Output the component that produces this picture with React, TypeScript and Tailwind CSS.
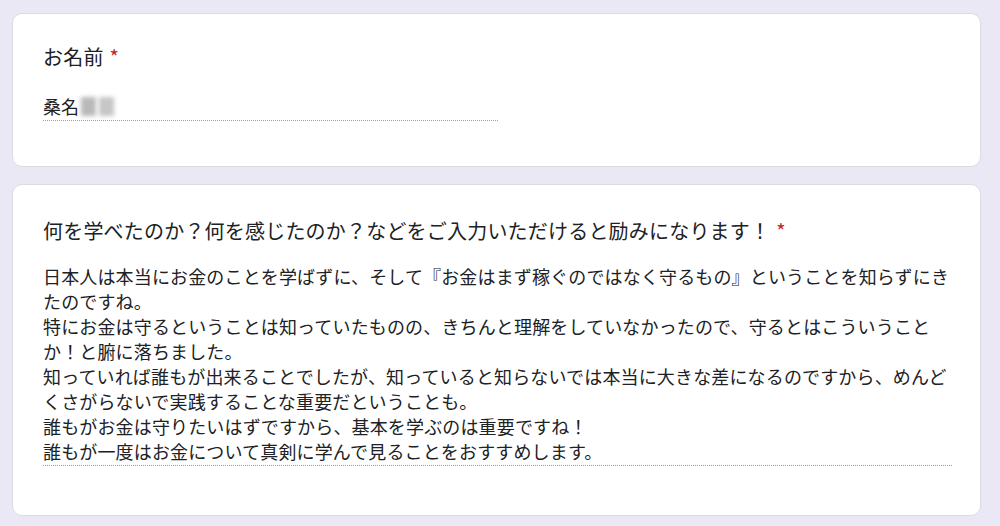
import React from "react";

const answerLines = [
  "日本人は本当にお金のことを学ばずに、そして『お金はまず稼ぐのではなく守るもの』ということを知らずにき",
  "たのですね。",
  "特にお金は守るということは知っていたものの、きちんと理解をしていなかったので、守るとはこういうこと",
  "か！と腑に落ちました。",
  "知っていれば誰もが出来ることでしたが、知っていると知らないでは本当に大きな差になるのですから、めんど",
  "くさがらないで実践することな重要だということも。",
  "誰もがお金は守りたいはずですから、基本を学ぶのは重要ですね！",
  "誰もが一度はお金について真剣に学んで見ることをおすすめします。",
];

const font = { fontFamily: '"Noto Sans CJK JP", "Noto Sans", sans-serif' };

const Required = () => <span className="ml-[6px] text-[#c5221f]">*</span>;

export default function App() {
  return (
    <div
      className="min-h-[526px] bg-[#ebe8f6] px-3 pt-[13px] pb-3 flex flex-col gap-[17px] text-[#202124]"
      style={font}
    >
      {/* Name question */}
      <div className="w-[969px] bg-white border border-[#dadce0] rounded-[10px] pl-[30px] pt-[29px] pb-[45px]">
        <div className="text-[20px] leading-[28px] tracking-[0.2px]">
          お名前
          <Required />
        </div>
        <div className="mt-[23px] w-[455px] border-b border-dotted border-[#9e9e9e] pb-[2px]">
          <div className="flex items-center text-[18px] leading-[24px]">
            <span>桑名</span>
            <span className="ml-[2px] flex gap-[3px] opacity-80">
              <span className="w-[15px] h-[19px] bg-[#a8a8a8] blur-[2px]" />
              <span className="w-[15px] h-[19px] bg-[#b8b8b8] blur-[2px]" />
            </span>
          </div>
        </div>
      </div>

      {/* Feedback question */}
      <div className="w-[969px] bg-white border border-[#dadce0] rounded-[10px] pl-[30px] pt-[32px] pb-[49px]">
        <div className="text-[20px] leading-[28px] tracking-[0.2px]">
          何を学べたのか？何を感じたのか？などをご入力いただけると励みになります！
          <Required />
        </div>
        <div className="mt-[19px] w-[909px] border-b border-dotted border-[#9e9e9e] pb-[1px]">
          {answerLines.map((line, i) => (
            <div key={i} className="text-[18px] leading-[25px] tracking-[0.15px] whitespace-nowrap">
              {line}
            </div>
          ))}
        </div>
      </div>
    </div>
  );
}
